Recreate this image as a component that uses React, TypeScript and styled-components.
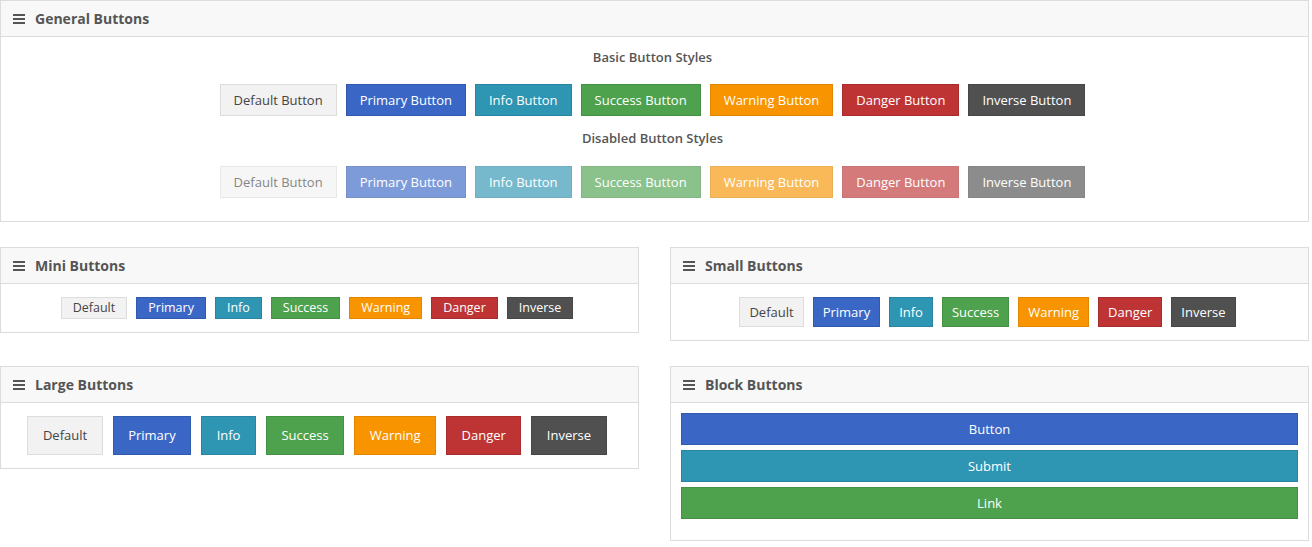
import React from "react";
import styled, { createGlobalStyle, css } from "styled-components";

type Variant = "default" | "primary" | "info" | "success" | "warning" | "danger" | "inverse";
type Size = "mini" | "small" | "normal" | "large";

const GlobalStyle = createGlobalStyle`
  html, body {
    margin: 0;
    padding: 0;
    background: #fff;
    font-family: "Open Sans", "Liberation Sans", sans-serif;
    color: #555;
  }
`;

const palette: Record<Variant, { bg: string; border: string; color: string }> = {
  default: { bg: "#f2f2f2", border: "#dcdcdc", color: "#444" },
  primary: { bg: "#3a67c6", border: "#3159ad", color: "#fff" },
  info: { bg: "#2e95b3", border: "#2884a0", color: "#fff" },
  success: { bg: "#4ea24e", border: "#449044", color: "#fff" },
  warning: { bg: "#f79400", border: "#e08600", color: "#fff" },
  danger: { bg: "#be3434", border: "#a92d2d", color: "#fff" },
  inverse: { bg: "#505050", border: "#464646", color: "#fff" },
};

const sizes: Record<Size, { height: number; pad: number; font: number }> = {
  mini: { height: 22, pad: 11, font: 12.5 },
  small: { height: 30, pad: 9, font: 13 },
  normal: { height: 32, pad: 13, font: 13 },
  large: { height: 39, pad: 14.5, font: 13 },
};

const Page = styled.div`
  width: 1309px;
  display: flex;
  flex-direction: column;
  gap: 25px;
`;

const Grid = styled.div`
  display: grid;
  grid-template-columns: 639px 639px;
  column-gap: 31px;
  row-gap: 25px;
  align-items: start;
`;

const Panel = styled.section`
  border: 1px solid #dcdcdc;
  background: #fff;
`;

const PanelHeader = styled.header`
  height: 35px;
  background: #f8f8f8;
  border-bottom: 1px solid #dcdcdc;
  display: flex;
  align-items: center;
  gap: 10px;
  padding: 0 12px;
  font-size: 14px;
  font-weight: 700;
  color: #555;
`;

const PanelBody = styled.div<{ $pad: string; $align?: "center" | "stretch" }>`
  padding: ${(p) => p.$pad};
  display: flex;
  flex-direction: column;
  align-items: ${(p) => p.$align ?? "center"};
`;

const SectionTitle = styled.h4<{ $first?: boolean }>`
  margin: ${(p) => (p.$first ? "0 0 17px" : "12px 0 18px")};
  font-size: 13px;
  line-height: 20px;
  font-weight: 600;
  color: #555;
`;

const ButtonRow = styled.div<{ $gap: number }>`
  display: flex;
  justify-content: center;
  gap: ${(p) => p.$gap}px;
`;

const Button = styled.button<{ $variant: Variant; $size: Size; $block?: boolean }>`
  box-sizing: border-box;
  font-family: "Open Sans", "Liberation Sans", sans-serif;
  cursor: pointer;
  border-radius: 0;
  border: 1px solid ${(p) => palette[p.$variant].border};
  background: ${(p) => palette[p.$variant].bg};
  color: ${(p) => palette[p.$variant].color};
  height: ${(p) => sizes[p.$size].height}px;
  padding: 0 ${(p) => sizes[p.$size].pad}px;
  font-size: ${(p) => sizes[p.$size].font}px;
  line-height: 1;
  white-space: nowrap;
  &:disabled {
    opacity: 0.65;
    cursor: not-allowed;
  }
  ${(p) =>
    p.$block &&
    css`
      width: 100%;
      display: block;
    `}
`;

const BlockStack = styled.div`
  display: flex;
  flex-direction: column;
  gap: 5px;
`;

const MenuIcon = () => (
  <svg width="12" height="10" viewBox="0 0 12 10" aria-hidden>
    <rect x="0" y="0" width="12" height="2" fill="#555" />
    <rect x="0" y="4" width="12" height="2" fill="#555" />
    <rect x="0" y="8" width="12" height="2" fill="#555" />
  </svg>
);

const variants: Variant[] = ["default", "primary", "info", "success", "warning", "danger", "inverse"];
const label = (v: Variant) => v.charAt(0).toUpperCase() + v.slice(1);

const Row: React.FC<{ size: Size; gap: number; suffix?: string; disabled?: boolean }> = ({
  size,
  gap,
  suffix = "",
  disabled,
}) => (
  <ButtonRow $gap={gap}>
    {variants.map((v) => (
      <Button key={v} $variant={v} $size={size} disabled={disabled}>
        {label(v) + suffix}
      </Button>
    ))}
  </ButtonRow>
);

const Card: React.FC<{ title: string; children: React.ReactNode }> = ({ title, children }) => (
  <Panel>
    <PanelHeader>
      <MenuIcon />
      {title}
    </PanelHeader>
    {children}
  </Panel>
);

export default function App() {
  return (
    <>
      <GlobalStyle />
      <Page>
        <Card title="General Buttons">
          <PanelBody $pad="10px 4px 23px 0">
            <SectionTitle $first>Basic Button Styles</SectionTitle>
            <Row size="normal" gap={9} suffix=" Button" />
            <SectionTitle>Disabled Button Styles</SectionTitle>
            <Row size="normal" gap={9} suffix=" Button" disabled />
          </PanelBody>
        </Card>
        <Grid>
          <Card title="Mini Buttons">
            <PanelBody $pad="13px 5px 13px 0">
              <Row size="mini" gap={9} />
            </PanelBody>
          </Card>
          <Card title="Small Buttons">
            <PanelBody $pad="13px 4px 13px 0">
              <Row size="small" gap={9} />
            </PanelBody>
          </Card>
          <Card title="Large Buttons">
            <PanelBody $pad="13px 5px 13px 0">
              <Row size="large" gap={10} />
            </PanelBody>
          </Card>
          <Card title="Block Buttons">
            <PanelBody $pad="10px 10px 21px" $align="stretch">
              <BlockStack>
                <Button $variant="primary" $size="normal" $block>
                  Button
                </Button>
                <Button $variant="info" $size="normal" $block>
                  Submit
                </Button>
                <Button $variant="success" $size="normal" $block>
                  Link
                </Button>
              </BlockStack>
            </PanelBody>
          </Card>
        </Grid>
      </Page>
    </>
  );
}
